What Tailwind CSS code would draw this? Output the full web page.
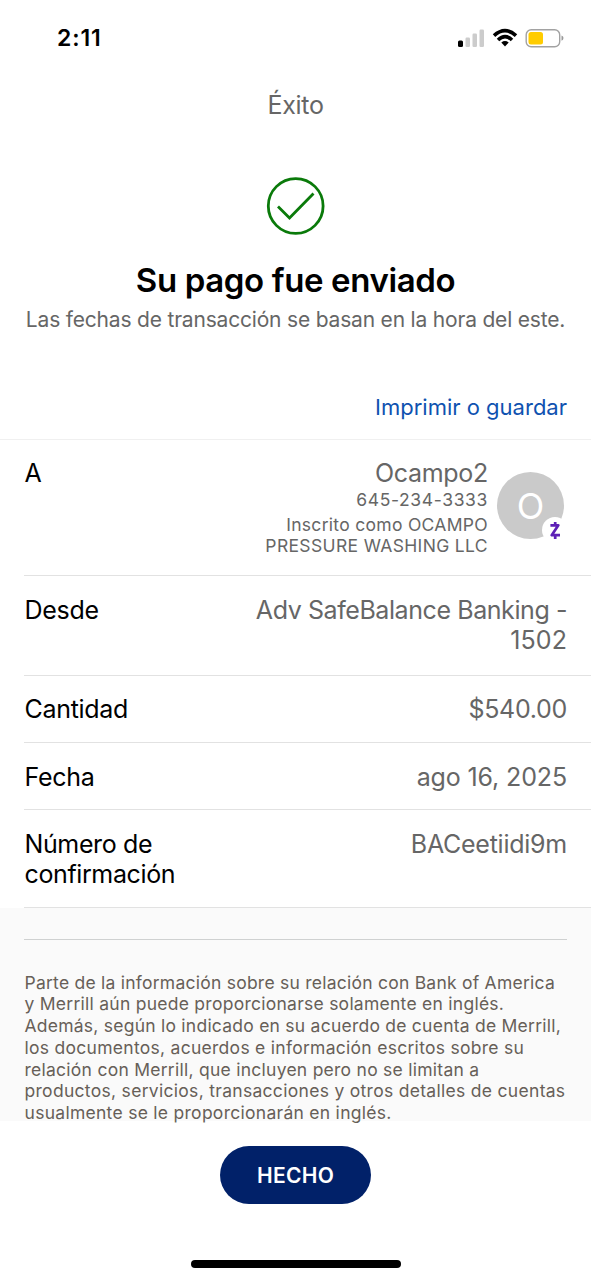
<!DOCTYPE html>
<html lang="es">
<head>
<meta charset="utf-8">
<title>Éxito</title>
<script src="https://cdn.jsdelivr.net/npm/@tailwindcss/browser@4"></script>
</head>
<body class="bg-white">
<div class="flex h-[1280px] w-[591px] flex-col overflow-hidden bg-white font-['Inter',sans-serif] text-black">
  <div class="flex h-[75px] items-center justify-between pl-[57px] pr-[27px]">
    <span class="text-[23px] font-semibold leading-[30px] tracking-[0.9px]">2:11</span>
    <div class="flex items-center">
      <svg class="h-[20px] w-[107px]" viewBox="0 0 107 20">
        <rect x="1" y="12.5" width="5" height="6.5" rx="1.5" fill="#000"/>
        <rect x="8.5" y="9.5" width="4.5" height="9.5" rx="1.2" fill="#ccc"/>
        <rect x="15.500" y="5.500" width="4.500" height="13.500" rx="1.200" fill="#ccc"/>
        <rect x="22.5" y="1.500" width="4.500" height="17.500" rx="1.200" fill="#ccc"/>
        <g fill="none" stroke="#000" stroke-width="3.600">
          <path d="M37 7.600Q48 -2.400 59 7.600"/>
          <path d="M41 12Q48 5.400 55 12"/>
        </g>
        <path d="M44.300 14.400Q48 11.600 51.700 14.400L48 18.500Z" fill="#000"/>
        <rect x="69.200" y="1.700" width="33.500" height="17" rx="5" fill="#fff" stroke="#a2a2a2" stroke-width="1.400"/>
        <rect x="71.500" y="4" width="14.500" height="12.500" rx="2.500" fill="#fc0"/>
        <path d="M104.500 7.500q2 .6 2 2.600t-2 2.600z" fill="#999"/>
      </svg>
    </div>
  </div>

  <header class="flex h-[364px] flex-col items-center">
    <h1 class="mt-[15px] text-[25px] leading-[30px] text-[#666]"><span class="tracking-[-0.3px]">Éxito</span></h1>
    <svg class="mt-[56px] h-[60px] w-[60px]" viewBox="0 0 60 60" fill="none" stroke="#0a7a0a" stroke-width="2.800">
      <circle cx="29.700" cy="30" r="27.400"/>
      <path d="M12 30.500L23.500 42L47.500 17.500"/>
    </svg>
    <h2 class="mt-[23px] text-[33px] font-semibold leading-[42px]"><span class="tracking-[-0.38px]">Su pago fue enviado</span></h2>
    <p class="mt-[5px] text-[21px] leading-[28px] text-[#666]"><span class="tracking-[-0.19px]">Las fechas de transacción se basan en la hora del este.</span></p>
    <a class="mr-[24px] mt-[58px] self-end text-[22px] leading-[30px] text-[#0f52b0]"><span class="tracking-[0px]">Imprimir o guardar</span></a>
  </header>

  <main class="border-t border-[#f0f0f0] text-[25px] leading-[30px]">
    <div class="ml-[24px] flex h-[136px] justify-between border-b border-[#e2e2e2] pl-[0.5px] pr-[27px] pt-[18px]">
      <span>A</span>
      <div class="flex">
        <div class="flex flex-col items-end text-right text-[17.5px] leading-[21.500px] text-[#666]">
          <span class="text-[25px] leading-[30px] tracking-[-0.3px]">Ocampo2</span>
          <span class="mt-[1px] tracking-[0.63px]">645-234-3333</span>
          <span class="mt-[3px] tracking-[0.3px]">Inscrito como OCAMPO</span>
          <span class="-mt-[0.5px] tracking-[0.35px]">PRESSURE WASHING LLC</span>
        </div>
        <div class="relative ml-[9px] mt-[14px] flex h-[67px] w-[67px] items-center justify-center rounded-full bg-[#cacaca]">
          <span class="text-[36px] leading-[40px] text-white">O</span>
          <svg class="absolute left-[45px] top-[45px] h-[26px] w-[26px]" viewBox="0 0 26 26">
            <circle cx="13" cy="13" r="13" fill="#fff"/>
            <path d="M8.400 8.300H16.300L9.700 18.200H18M13.200 5V8M13.200 18V22" fill="none" stroke="#5e21b6" stroke-width="2.700" stroke-linejoin="round"/>
          </svg>
        </div>
      </div>
    </div>
    <div class="ml-[24px] flex h-[100px] justify-between border-b border-[#e2e2e2] pl-[0.5px] pr-[24px] pt-[19px]">
      <span class="tracking-[-0.3px]">Desde</span>
      <span class="text-right text-[#666]"><span class="tracking-[-0.42px]">Adv SafeBalance Banking -</span><br><span class="tracking-[0.1px]">1502</span></span>
    </div>
    <div class="ml-[24px] flex h-[67px] justify-between border-b border-[#e2e2e2] pl-[0.5px] pr-[24px] pt-[18px]">
      <span class="tracking-[-0.3px]">Cantidad</span>
      <span class="text-[#666] tracking-[-0.3px]">$540.00</span>
    </div>
    <div class="ml-[24px] flex h-[67px] justify-between border-b border-[#e2e2e2] pl-[0.5px] pr-[24px] pt-[18.500px]">
      <span class="tracking-[-0.3px]">Fecha</span>
      <span class="text-[#666] tracking-[-0.13px]">ago 16, 2025</span>
    </div>
    <div class="ml-[24px] flex h-[98px] justify-between border-b border-[#e2e2e2] pl-[0.5px] pr-[24px] pt-[19px]">
      <span class="tracking-[-0.38px]">Número de<br>confirmación</span>
      <span class="text-[#666] tracking-[-0.25px]">BACeetiidi9m</span>
    </div>
  </main>

  <section class="h-[213px] shrink-0 bg-[#fafafa] px-[24px] pt-[31px]">
    <div class="border-t border-[#cfd1d1] pl-[0.5px] pt-[31.500px] text-[17.5px] leading-[21.750px] text-[#675f58]">
      <p class="whitespace-nowrap"><span class="tracking-[0.24px]">Parte de la información sobre su relación con Bank of America</span><br>
      <span class="tracking-[0.26px]">y Merrill aún puede proporcionarse solamente en inglés.</span><br>
      <span class="tracking-[0.24px]">Además, según lo indicado en su acuerdo de cuenta de Merrill,</span><br>
      <span class="tracking-[0.28px]">los documentos, acuerdos e información escritos sobre su</span><br>
      <span class="tracking-[0.26px]">relación con Merrill, que incluyen pero no se limitan a</span><br>
      <span class="tracking-[0.3px]">productos, servicios, transacciones y otros detalles de cuentas</span><br>
      <span class="tracking-[0.28px]">usualmente se le proporcionarán en inglés.</span></p>
    </div>
  </section>

  <footer class="flex flex-1 flex-col items-center pt-[25px]">
    <button class="h-[58px] w-[151px] rounded-full bg-[#012169] pt-px text-[21px] font-semibold leading-[30px] text-white"><span class="tracking-[0.3px]">HECHO</span></button>
    <div class="mt-[56px] h-[8px] w-[210px] rounded-full bg-black"></div>
  </footer>
</div>
</body>
</html>
